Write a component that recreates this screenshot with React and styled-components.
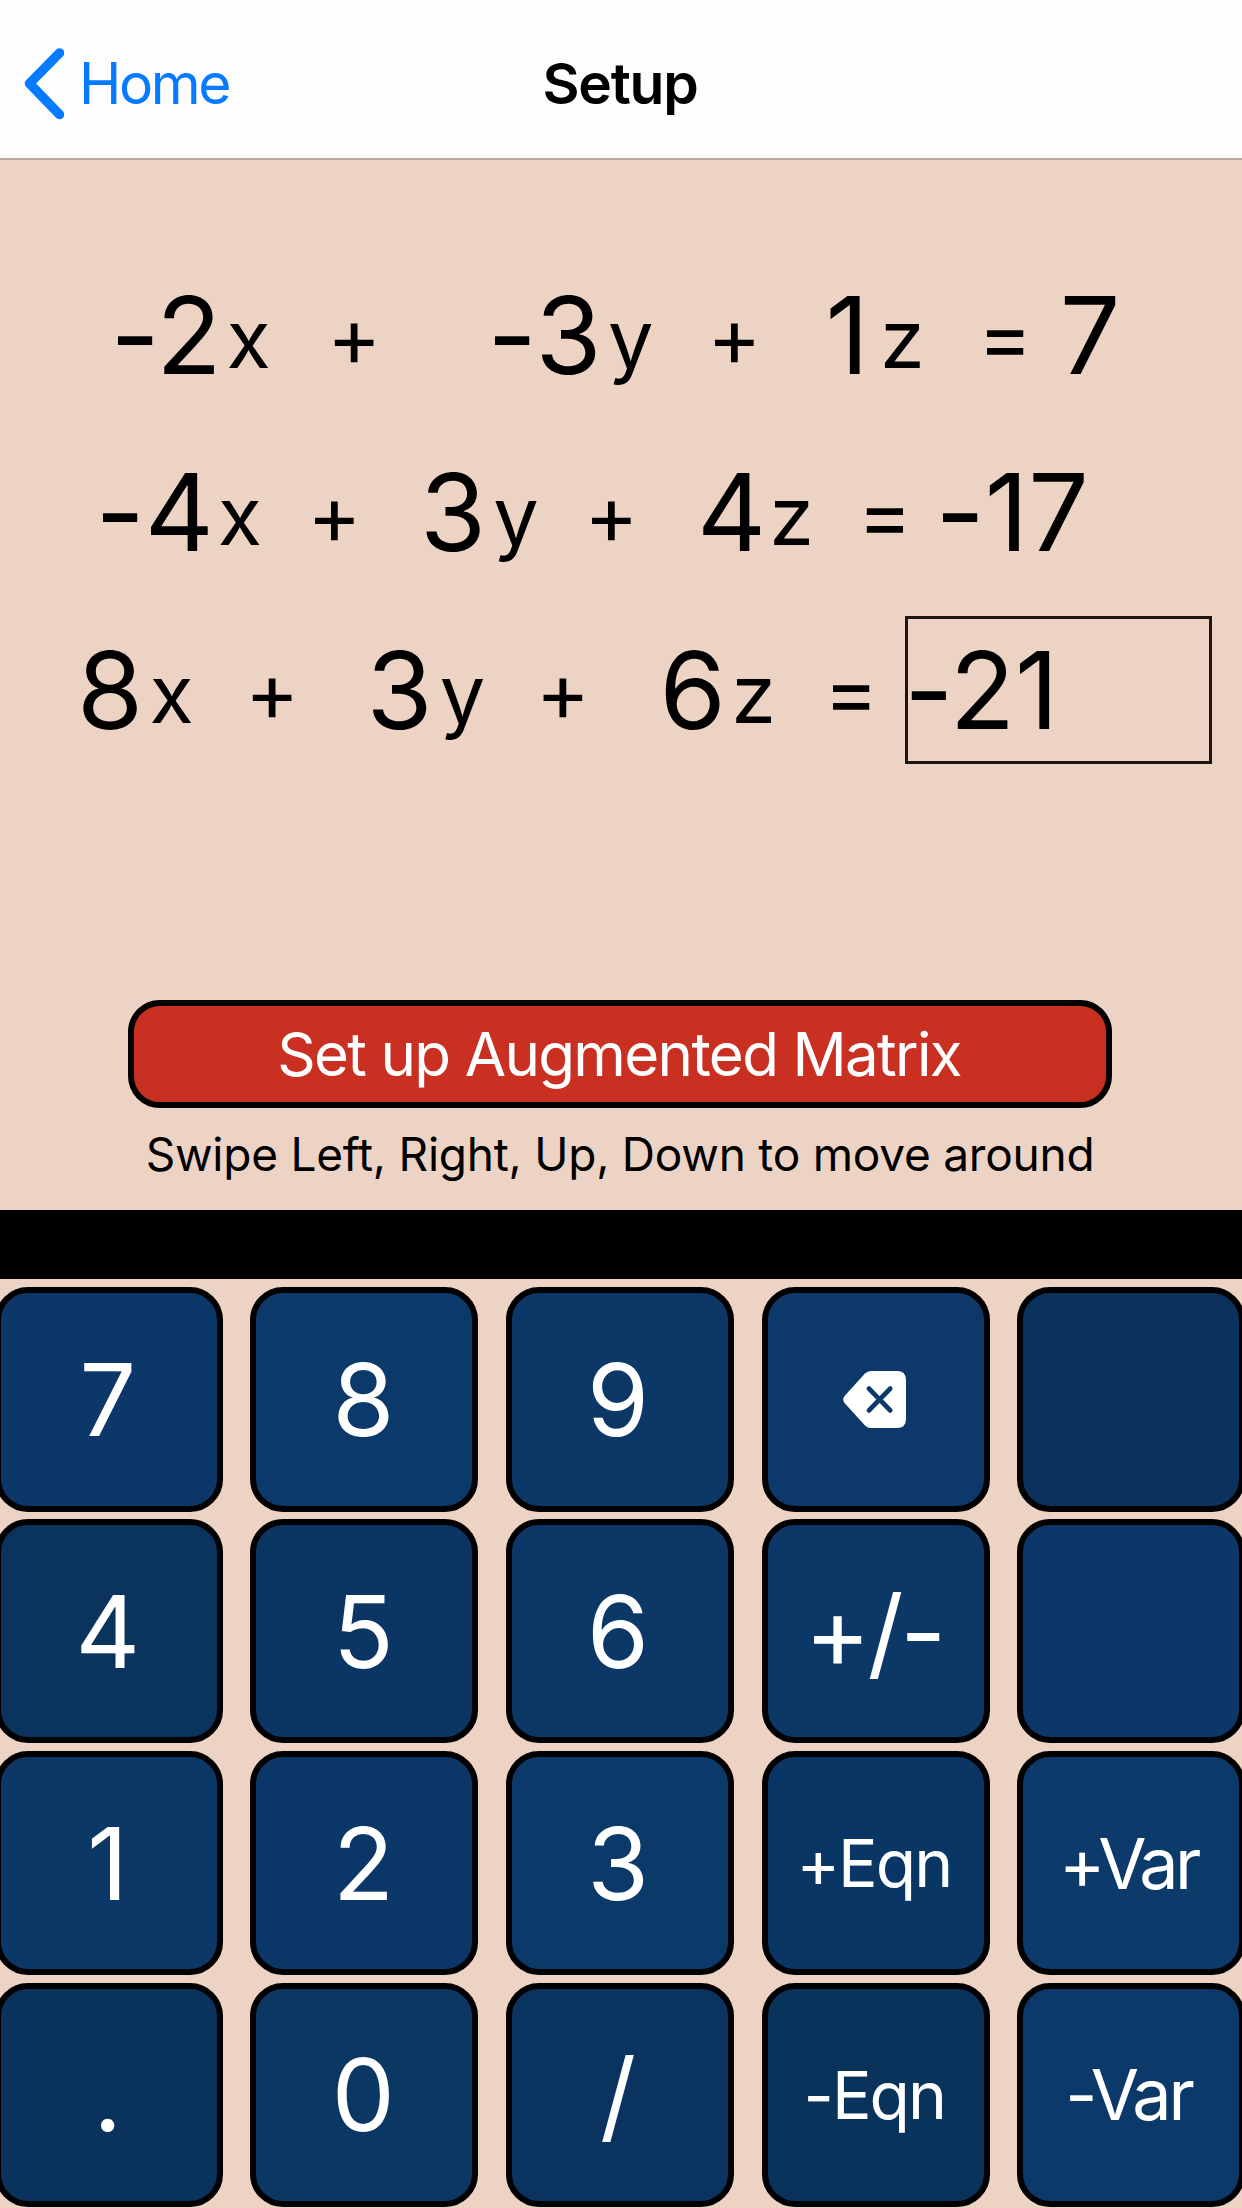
import React from "react";
import styled, { createGlobalStyle } from "styled-components";

const Global = createGlobalStyle`
  html, body { margin: 0; padding: 0; background: #edd3c4; }
  *, *::before, *::after { box-sizing: border-box; }
`;

const Screen = styled.div`
  width: 1242px;
  height: 2208px;
  overflow: hidden;
  display: flex;
  flex-direction: column;
  background: #edd3c4;
  color: #000;
  font-family: Inter, Roboto, "Liberation Sans", sans-serif;
  font-weight: 400;
  font-feature-settings: "calt" 0;
  white-space: pre;
`;

const NavBar = styled.header`
  height: 160px;
  flex: none;
  padding: 9px 24px 0 22px;
  display: grid;
  grid-template-columns: 1fr auto 1fr;
  align-items: center;
  background: #fdfdfd;
  border-bottom: 2px solid #b8a89f;
`;

const BackButton = styled.a`
  display: flex;
  align-items: center;
  gap: 15px;
  color: #067bff;
  font-size: 57px;
  line-height: 70px;
  letter-spacing: -2.4px;
`;

const Title = styled.h1`
  margin: 0;
  font-size: 57px;
  line-height: 70px;
  font-weight: 600;
  letter-spacing: -1.3px;
`;

const Equations = styled.main`
  flex: none;
  height: 840px;
  padding-top: 86px;
`;

const EquationRow = styled.div`
  height: 177.5px;
  display: flex;
  align-items: center;
`;

const Token = styled.span`
  flex: none;
  display: flex;
  justify-content: center;
  width: ${(p) => p.$w}px;
  margin-left: ${(p) => p.$gap}px;
  line-height: 130px;
`;

const Coefficient = styled(Token)`
  font-size: 107px;
`;

const Operator = styled(Token)`
  padding-top: 5px;
  font-size: 82px;
`;

const Variable = styled(Token)`
  padding-top: 8px;
  font-size: 81px;
`;

const ActiveField = styled.div`
  flex: none;
  width: 307px;
  height: 148px;
  margin-left: 34px;
  border: 3px solid #1c1613;
  display: flex;
  align-items: center;
`;

const SetupButton = styled.button`
  flex: none;
  align-self: center;
  width: 984px;
  height: 108px;
  padding: 0 2px 0 0;
  margin: 0 2px 0 0;
  border: 6px solid #000;
  border-radius: 32px;
  background: #c93022;
  color: #fff;
  font: inherit;
  font-feature-settings: "calt" 0;
  font-size: 60px;
  letter-spacing: -1.65px;
`;

const Hint = styled.p`
  flex: none;
  margin: 0;
  height: 102px;
  padding: 0 2px 10px 0;
  display: flex;
  align-items: center;
  justify-content: center;
  font-size: 46px;
  letter-spacing: -0.24px;
`;

const Divider = styled.div`
  flex: none;
  height: 69px;
  background: #000;
`;

const Keypad = styled.section`
  flex: none;
  width: 1251px;
  margin: 8px 0 0 -5.3px;
  display: grid;
  grid-template-columns: repeat(5, 228px);
  grid-auto-rows: 224.5px;
  gap: 7.4px 27.7px;
`;

const Key = styled.button`
  padding: 0 ${(p) => p.$inset || 2}px 0 0;
  border: 6px solid #000;
  border-radius: 33px;
  background: ${(p) => p.$bg};
  color: #fff;
  display: flex;
  align-items: center;
  justify-content: center;
  font: inherit;
  font-feature-settings: "calt" 0;
  font-size: ${(p) => p.$size || 100}px;
  letter-spacing: ${(p) => p.$track || 0}px;
`;

const kinds = { n: Coefficient, v: Variable, o: Operator };

const rows = [
  [
    ["n", "-2", 117, 215],
    ["v", "x", 230.3, 266.7],
    ["o", "+", 333.6, 374.6],
    ["n", "-3", 495, 594],
    ["v", "y", 611, 650.5],
    ["o", "+", 714, 755],
    ["n", "1", 832.4, 862.3],
    ["v", "z", 885.7, 919],
    ["o", "=", 985.5, 1025],
    ["n", "7", 1064, 1116],
  ],
  [
    ["n", "-4", 102, 207.3],
    ["v", "x", 221.5, 258],
    ["o", "+", 314, 354.7],
    ["n", "3", 426, 480],
    ["v", "y", 496.3, 535.7],
    ["o", "+", 590.8, 632],
    ["n", "4", 702, 761],
    ["v", "z", 775, 808.5],
    ["o", "=", 865, 905],
    ["n", "-17", 941, 1083.4],
  ],
  [
    ["n", "8", 82, 138],
    ["v", "x", 153.4, 190],
    ["o", "+", 251.7, 292.7],
    ["n", "3", 373, 426],
    ["v", "y", 443, 482],
    ["o", "+", 542.6, 583],
    ["n", "6", 664, 721.4],
    ["v", "z", 736.7, 770.5],
    ["o", "=", 831, 871.5],
  ],
];

const keys = [
  { label: "7", bg: "#0b3869" },
  { label: "8", bg: "#0b3969" },
  { label: "9", bg: "#0b3866", inset: 4 },
  { icon: true, bg: "#0c3969", inset: 3 },
  { label: "", bg: "#0a325c" },
  { label: "4", bg: "#0a345e" },
  { label: "5", bg: "#0b3663" },
  { label: "6", bg: "#0b3866", inset: 4 },
  { label: "+/-", bg: "#0b3867", track: -3.2, inset: 4 },
  { label: "", bg: "#0b3868" },
  { label: "1", bg: "#0b3867" },
  { label: "2", bg: "#0a3767" },
  { label: "3", bg: "#0b3969", inset: 4 },
  { label: "+Eqn", bg: "#0a3665", size: 66, track: -2, inset: 4 },
  { label: "+Var", bg: "#0b3a6b", size: 70, track: -3.6, inset: 6 },
  { label: ".", bg: "#09325c" },
  { label: "0", bg: "#0a3863" },
  { label: "/", bg: "#0a345f", inset: 4 },
  { label: "-Eqn", bg: "#0a335c", size: 66, track: -2, inset: 3 },
  { label: "-Var", bg: "#0b3969", size: 70, track: -3.2, inset: 6 },
];

function BackChevron() {
  return (
    <svg width="42" height="72" viewBox="0 0 42 72" fill="none">
      <path d="M37.500 5 L7.500 35.500 L37.500 66.500" stroke="#067bff" strokeWidth="9.600" strokeLinecap="round" strokeLinejoin="round" />
    </svg>
  );
}

function BackspaceIcon() {
  return (
    <svg width="63" height="57" viewBox="0 0 63 57">
      <path
        d="M28 0 H54 Q63 0 63 9 V48 Q63 57 54 57 H28 Q24.500 57 22 54.500 L2 32.500 Q-1.500 28.500 2 24.500 L22 2.500 Q24.500 0 28 0 Z"
        fill="#fff"
      />
      <path d="M26 17.600 L47.200 39.400 M47.200 17.600 L26 39.400" stroke="#0c3969" strokeWidth="4.800" strokeLinecap="round" />
    </svg>
  );
}

function Equation({ tokens, children }) {
  return (
    <EquationRow>
      {tokens.map(([kind, text, start, end], i) => {
        const Part = kinds[kind];
        const previousEnd = i ? tokens[i - 1][3] : 0;
        return (
          <Part key={i} $w={end - start} $gap={start - previousEnd}>
            {text}
          </Part>
        );
      })}
      {children}
    </EquationRow>
  );
}

export default function App() {
  return (
    <>
      <Global />
      <Screen>
        <NavBar>
          <BackButton>
            <BackChevron />
            Home
          </BackButton>
          <Title>Setup</Title>
        </NavBar>
        <Equations>
          <Equation tokens={rows[0]} />
          <Equation tokens={rows[1]} />
          <Equation tokens={rows[2]}>
            <ActiveField>
              <Coefficient $w={138} $gap={4}>-21</Coefficient>
            </ActiveField>
          </Equation>
        </Equations>
        <SetupButton>Set up Augmented Matrix</SetupButton>
        <Hint>Swipe Left, Right, Up, Down to move around</Hint>
        <Divider />
        <Keypad>
          {keys.map((key, i) => (
            <Key key={i} $bg={key.bg} $size={key.size} $track={key.track} $inset={key.inset}>
              {key.icon ? <BackspaceIcon /> : key.label}
            </Key>
          ))}
        </Keypad>
      </Screen>
    </>
  );
}
